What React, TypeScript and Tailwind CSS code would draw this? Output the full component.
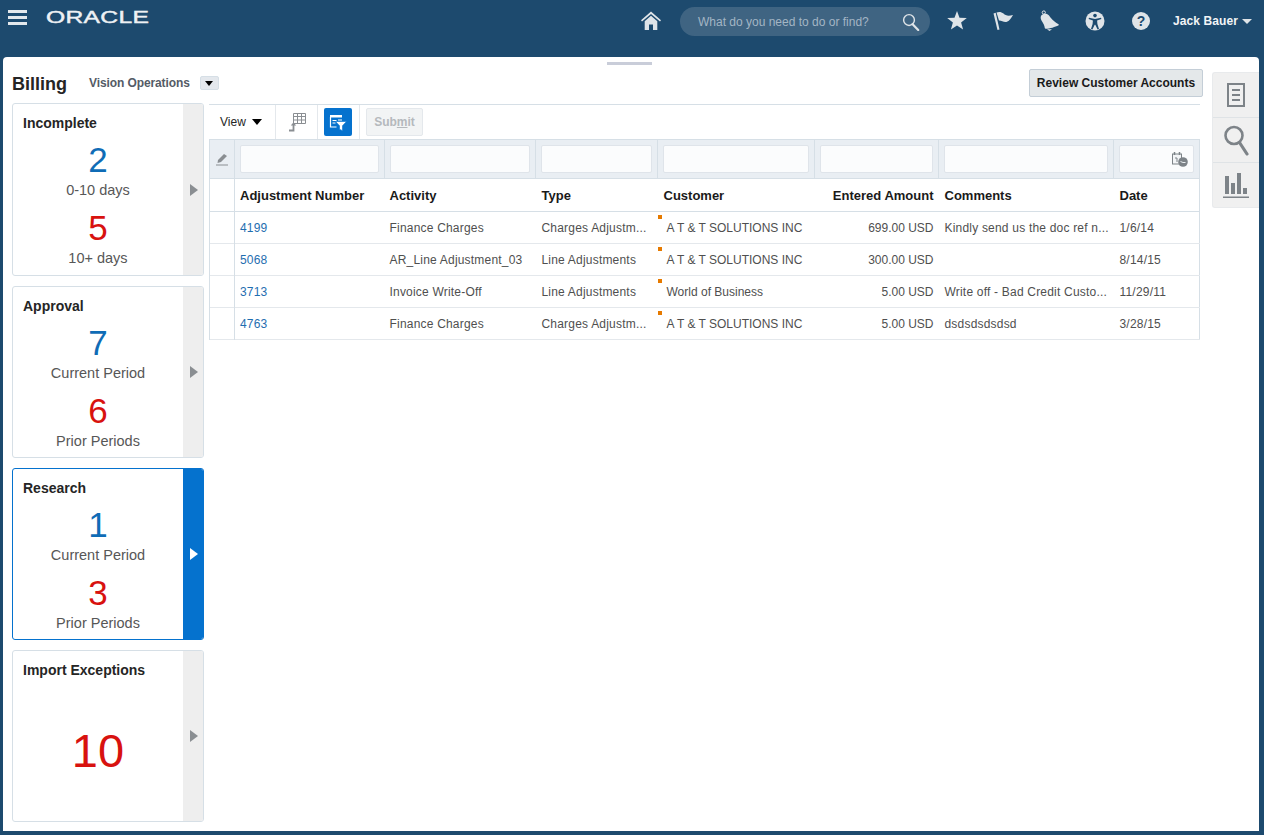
import React from "react";

const F = "[font-family:'Liberation_Sans',Arial,sans-serif]";

function Hamburger() {
  return (
    <div className="flex flex-col gap-[3px] w-[19px]">
      <div className="h-[3px] bg-[#e3e8ec]" />
      <div className="h-[3px] bg-[#e3e8ec]" />
      <div className="h-[3px] bg-[#e3e8ec]" />
    </div>
  );
}

function HomeIcon() {
  return (
    <svg width="20" height="20" viewBox="0 0 20 20" fill="#dfe4e8">
      <path d="M10 0.500 0 9.300l1 1.200L10 3l9 7.500 1-1.200z" />
      <path d="M10 4.800l6.300 5.400V19h-4.300v-5.500H8V19H3.700v-8.800z" />
    </svg>
  );
}
function SearchIcon({ color, size, sw }: { color: string; size: number; sw: number }) {
  return (
    <svg width={size} height={size} viewBox="0 0 20 20" fill="none" stroke={color}>
      <circle cx="7.800" cy="7.800" r="6" strokeWidth={sw} />
      <path d="M11.800 12.400 18 19" strokeWidth={sw + 0.8} strokeLinecap="round" />
    </svg>
  );
}
function StarIcon() {
  return (
    <svg width="20" height="19" viewBox="0 0 20 19" fill="#dfe4e8">
      <path d="M10 0l2.500 6.800 7.300.3-5.700 4.500 2 7L10 14.600l-6.100 4 2-7L.2 7.100l7.300-.3z" />
    </svg>
  );
}
function FlagIcon() {
  return (
    <svg width="21" height="20" viewBox="0 0 21 20" fill="#dfe4e8">
      <path d="M0.500 2.500 2.700 1.800l3.800 16.600-2 .7z" />
      <path d="M3.500 1.500C6 .5 8.500.8 10.500 2.500c2 2 4.500 3 9.500 1.500-1.500 2.500-3.500 6-6 6.800-3 1-5.500-1.500-8-1.300z" />
    </svg>
  );
}
function BellIcon() {
  return (
    <svg width="20" height="22" viewBox="0 0 20 22" fill="#dfe4e8">
      <circle cx="3.800" cy="2.500" r="1.600" fill="none" stroke="#dfe4e8" strokeWidth="1" />
      <path d="M0.800 6.500c1-3 5.500-3.500 7.700-1.500 2 2 3 5 10 9.200.5.400.3 1-.2 1.200-3 1.300-8.500 3.300-12.500 3.400-.6 0-1-.3-1-.8-.2-2.500-1.500-4.500-2.700-6.500C1 9.800.4 8 .8 6.500z" />
      <path d="M7 19.300h5l-2.500 1.700z" />
    </svg>
  );
}
function AccessIcon() {
  return (
    <svg width="20" height="20" viewBox="0 0 20 20">
      <circle cx="10" cy="10" r="9.500" fill="#dfe4e8" />
      <circle cx="10" cy="4.600" r="1.800" fill="#1d4a6e" />
      <path d="M4 6.800 10 8l6-1.200.4 1.300-4.300 1.500.3 3.300 1.600 5-1.400.5-2.300-4.700h-.6l-2.300 4.700-1.400-.5 1.600-5 .3-3.300L3.600 8.100z" fill="#1d4a6e" />
    </svg>
  );
}
function HelpIcon() {
  return (
    <div className={`w-[18px] h-[18px] rounded-full bg-[#dfe4e8] flex items-center justify-center text-[#1d4a6e] text-[14px] font-bold leading-none ${F}`}>?</div>
  );
}

function Arrow({ active }: { active?: boolean }) {
  return (
    <svg className="ml-[2px]" width="8" height="12" viewBox="0 0 8 12" fill={active ? "#ffffff" : "#8a8e92"}>
      <path d="M0 0l8 6-8 6z" />
    </svg>
  );
}

type Stat = { n: string; label: string; color: string };

function Card({
  title,
  stats,
  h,
  active,
  big,
}: {
  title: string;
  stats?: Stat[];
  h: string;
  active?: boolean;
  big?: string;
}) {
  return (
    <div
      className={`${h} flex rounded-[3px] border overflow-hidden ${
        active ? "border-[#0572ce]" : "border-[#d6dfe6]"
      }`}
    >
      <div className="w-[170px] pl-[10px] flex flex-col">
        <div className="pt-[10px] h-[37px] text-[14px] font-bold leading-[18px] text-[#252525]">{title}</div>
        {stats && (
          <div className="flex flex-col items-center">
            {stats.map((s, i) => (
              <div key={i} className={`flex flex-col items-center -ml-[10px] ${i === 1 ? "mt-[9px]" : ""}`}>
                <div className={`text-[35px] leading-[38px] ${s.color === "b" ? "text-[#0f6cb6]" : "text-[#d8120f]"}`}>{s.n}</div>
                <div className="text-[14.5px] leading-[20px] text-[#575757] mt-[1px]">{s.label}</div>
              </div>
            ))}
          </div>
        )}
        {big && (
          <div className="flex-1 flex items-start justify-center -ml-[10px] pt-[35px] text-[47px] leading-[56px] text-[#d8120f]">{big}</div>
        )}
      </div>
      <div className={`flex-1 flex items-center justify-center ${active ? "bg-[#0572ce]" : "bg-[#eeeeee]"}`}>
        <Arrow active={active} />
      </div>
    </div>
  );
}

const cols = ["w-[25px]", "w-[150px]", "w-[151px]", "w-[122px]", "w-[157px]", "w-[124px]", "w-[175px]", "w-[86px]"];

const rows = [
  ["4199", "Finance Charges", "Charges Adjustm...", "A T & T SOLUTIONS INC", "699.00 USD", "Kindly send us the doc ref n...", "1/6/14"],
  ["5068", "AR_Line Adjustment_03", "Line Adjustments", "A T & T SOLUTIONS INC", "300.00 USD", "", "8/14/15"],
  ["3713", "Invoice Write-Off", "Line Adjustments", "World of Business", "5.00 USD", "Write off - Bad Credit Custo...", "11/29/11"],
  ["4763", "Finance Charges", "Charges Adjustm...", "A T & T SOLUTIONS INC", "5.00 USD", "dsdsdsdsdsd", "3/28/15"],
];
const headers = ["Adjustment Number", "Activity", "Type", "Customer", "Entered Amount", "Comments", "Date"];

function FilterInput({ cal }: { cal?: boolean }) {
  return (
    <div className="h-[28px] mx-[5px] bg-[#fbfcfd] border border-[#dfe4ea] rounded-[2px] relative">
      {cal && (
        <svg className="absolute right-[4px] top-[5px]" width="18" height="17" viewBox="0 0 18 17" fill="none">
          <rect x="1.500" y="3" width="9" height="10" stroke="#7d8388" strokeWidth="1" fill="#f3f5f7" />
          <path d="M3.500 1v3M8.500 1v3" stroke="#7d8388" strokeWidth="1.500" />
          <path d="M4 7h2v4" stroke="#7d8388" strokeWidth="1" />
          <circle cx="12" cy="11" r="4.800" fill="#7d8388" />
          <path d="M9.500 10.500l2.500 1h2.500" stroke="#e8ecef" strokeWidth="1" />
        </svg>
      )}
    </div>
  );
}

export default function App() {
  return (
    <div className={`w-[1264px] h-[835px] bg-[#1d4a6e] flex flex-col overflow-hidden ${F}`}>
      <header className="h-[57px] shrink-0 flex relative">
        <div className="pl-[8px] pt-[10px]">
          <Hamburger />
        </div>
        <div className="pl-[19px] pt-[7px] w-[140px]">
          <div className="origin-left scale-x-[1.54] text-[#eef1f4] text-[16px] leading-[22px] tracking-[0.2px] [-webkit-text-stroke:0.4px_#eef1f4]">ORACLE</div>
        </div>
        <div className="flex-1 flex justify-end items-start pt-[7px] pr-[12px]">
          <div className="mt-[4px] mr-[19px]"><HomeIcon /></div>
          <div className="w-[250px] h-[29px] rounded-full bg-[#3f6482] flex items-center pl-[18px] pr-[10px] justify-between">
            <span className="text-[12px] text-[#a3b5c4]">What do you need to do or find?</span>
            <SearchIcon color="#dfe4e8" size={18} sw={1.600} />
          </div>
          <div className="mt-[4px] ml-[17px]"><StarIcon /></div>
          <div className="mt-[4px] ml-[26px]"><FlagIcon /></div>
          <div className="mt-[3px] ml-[26px]"><BellIcon /></div>
          <div className="mt-[4px] ml-[25px]"><AccessIcon /></div>
          <div className="mt-[5px] ml-[27px]"><HelpIcon /></div>
          <div className="ml-[23px] mt-[6px] flex items-center text-[12px] font-bold leading-[16px] tracking-[0.1px] text-[#f2f4f6]">
            Jack Bauer
            <span className="ml-[4px] w-0 h-0 border-x-[5px] border-x-transparent border-t-[5px] border-t-[#dfe4e8]" />
          </div>
        </div>
      </header>

      <main className="relative ml-[3px] mr-[5px] h-[774px] bg-white rounded-t-[4px] flex">
        <div className="absolute left-[604px] top-[5px] w-[45px] h-[3px] bg-[#c9cdd9]" />
        <div className="w-[1200px] pl-[9px] flex flex-col">
          <div className="h-[46px] flex items-start">
            <div className="mt-[16px] text-[18px] leading-[22px] font-bold text-[#252525]">Billing</div>
            <div className="mt-[18px] ml-[22px] text-[12px] leading-[16px] font-bold tracking-[-0.1px] text-[#545b66]">Vision Operations</div>
            <div className="mt-[19px] ml-[10px] w-[19px] h-[14px] rounded-[2px] bg-[#e4e8ed] border border-[#d6dfe6] flex items-center justify-center">
              <span className="w-0 h-0 border-x-[4px] border-x-transparent border-t-[5px] border-t-black" />
            </div>
            <div className="flex-1" />
            <div className="mt-[12px] h-[28px] w-[174px] rounded-[2px] border border-[#c4ced7] bg-[#e4e8ea] flex items-center justify-center text-[12px] font-bold text-[#1a1a1a]">
              Review Customer Accounts
            </div>
          </div>
          <div className="flex">
            <div className="w-[192px] flex flex-col gap-[10px]">
              <Card h="h-[173px]" title="Incomplete" stats={[{ n: "2", label: "0-10 days", color: "b" }, { n: "5", label: "10+ days", color: "r" }]} />
              <Card h="h-[172px]" title="Approval" stats={[{ n: "7", label: "Current Period", color: "b" }, { n: "6", label: "Prior Periods", color: "r" }]} />
              <Card h="h-[172px]" active title="Research" stats={[{ n: "1", label: "Current Period", color: "b" }, { n: "3", label: "Prior Periods", color: "r" }]} />
              <Card h="h-[172px]" title="Import Exceptions" big="10" />
            </div>
            <div className="ml-[5px] w-[991px]">
              <div className="mt-[1px] border-t border-[#d6dfe6] h-[35px] flex items-stretch">
                <div className="w-[67px] border-r border-[#e4e8ec] flex items-center pl-[11px] text-[12px] text-[#252525]">
                  View
                  <span className="ml-[6px] w-0 h-0 border-x-[5px] border-x-transparent border-t-[6px] border-t-black" />
                </div>
                <div className="w-[42px] border-r border-[#e4e8ec] flex items-center pl-[12px]">
                  <svg width="18" height="20" viewBox="0 0 18 20" fill="none" stroke="#8a8e92">
                    <path d="M5.500 1.500h12v10h-12zM5.500 4.500h12M5.500 8h12M9.500 1.500v10M13.500 1.500v10" />
                    <path d="M1 18.500h4.500v-6" strokeWidth="1.800" />
                    <path d="M2.800 13.500l2.700-3.300 2.700 3.300z" fill="#8a8e92" stroke="none" />
                  </svg>
                </div>
                <div className="w-[42px] border-r border-[#e4e8ec] flex items-center pl-[6px]">
                  <div className="w-[28px] h-[28px] bg-[#0572ce] rounded-[2px] flex items-center justify-center">
                    <svg width="18" height="17" viewBox="0 0 18 17" fill="none">
                      <path d="M1 1h12v2.500H1z" fill="#fff" />
                      <path d="M1.500 3v10h6M3.500 6.500h4M3.500 9h3M9 6h4" stroke="#fff" strokeWidth="1.200" />
                      <path d="M6.500 7.500h11l-4 4.200v5l-3-1.500v-3.500z" fill="#fff" stroke="#0572ce" strokeWidth=".6" />
                    </svg>
                  </div>
                </div>
                <div className="flex items-center ml-[6px]">
                  <div className="w-[57px] h-[28px] rounded-[2px] bg-[#f2f4f5] border border-[#e4e8ec] flex items-center justify-center text-[12px] font-bold text-[#b5b9bd]">
                    <span>Sub<span className="underline">m</span>it</span>
                  </div>
                </div>
              </div>
              <table className="table-fixed border-collapse w-[990px] text-[12px] tracking-[0.2px] text-[#4f4f4f] border-b border-r border-[#d6dfe6]">
                <colgroup>
                  {cols.map((c, i) => (
                    <col key={i} className={c} />
                  ))}
                </colgroup>
                <tbody>
                  <tr className="h-[39px] bg-[#e9eef3] border-y border-[#d6dfe6]">
                    <td className="border-x border-[#d6dfe6] text-center">
                      <svg className="mx-auto" width="14" height="14" viewBox="0 0 14 14" fill="#8a8e92">
                        <path d="M3 8l6-6 3 2-6 6-3.500 1z" />
                        <path d="M1 13h12" stroke="#8a8e92" strokeWidth="1" />
                      </svg>
                    </td>
                    {headers.map((_, i) => (
                      <td key={i} className="border-r border-[#d6dfe6] last:border-r-0">
                        <FilterInput cal={i === 6} />
                      </td>
                    ))}
                  </tr>
                  <tr className="h-[33px] border-b border-[#d6dfe6]">
                    <td className="border-x border-[#d6dfe6]" />
                    {headers.map((h, i) => (
                      <td key={i} className={`pr-[5px] ${i < 2 ? "pl-[5px]" : "pl-[6px]"} pt-[1px] text-[13px] tracking-normal font-bold text-[#1a1a1a] whitespace-nowrap ${i === 4 ? "text-right" : ""}`}>
                        {h}
                      </td>
                    ))}
                  </tr>
                  {rows.map((r, ri) => (
                    <tr key={ri} className="h-[32px] border-b border-[#e4e8ec]">
                      <td className="border-x border-[#d6dfe6]" />
                      {r.map((c, i) => (
                        <td
                          key={i}
                          className={`pr-[5px] whitespace-nowrap overflow-hidden ${i < 2 ? "pl-[5px]" : i === 3 ? "pl-[9px]" : "pl-[6px]"} ${i === 0 ? "text-[#1f6eb0]" : ""} ${i === 4 ? "text-right tracking-normal" : ""} ${i === 3 ? "relative tracking-normal" : ""}`}
                        >
                          {i === 3 && <span className="absolute left-0 top-[3px] w-[4px] h-[4px] bg-[#e67a00]" />}
                          {c}
                        </td>
                      ))}
                    </tr>
                  ))}
                </tbody>
              </table>
            </div>
          </div>
        </div>
        <div className="ml-[9px] mt-[15px] w-[47px] h-[136px] bg-[#f0f0f0] border border-[#e8eaec] border-r-0 rounded-l-[3px] flex flex-col">
          <div className="h-[45px] border-b border-[#dfe3e6] flex items-center justify-center">
            <svg width="18" height="24" viewBox="0 0 18 24" fill="none" stroke="#7d8388">
              <rect x="1" y="1" width="16" height="22" strokeWidth="2" />
              <path d="M5 7h8M5 12h8M5 17h8" strokeWidth="1.800" />
            </svg>
          </div>
          <div className="h-[45px] border-b border-[#dfe3e6] flex items-center justify-center">
            <svg width="26" height="31" viewBox="0 0 26 31" fill="none" stroke="#7d8388">
              <circle cx="11" cy="10.500" r="8.500" strokeWidth="2.600" />
              <path d="M16.500 17.500 24 29" strokeWidth="3.200" strokeLinecap="round" />
            </svg>
          </div>
          <div className="flex-1 flex items-center justify-center">
            <svg width="26" height="27" viewBox="0 0 26 27" fill="#7d8388">
              <path d="M2 4h4v18H2zM8 11h4v11H8zM14 1h4v21h-4zM20 16h4v6h-4z" />
              <path d="M0 24.500h26V26H0z" />
            </svg>
          </div>
        </div>
      </main>
    </div>
  );
}
